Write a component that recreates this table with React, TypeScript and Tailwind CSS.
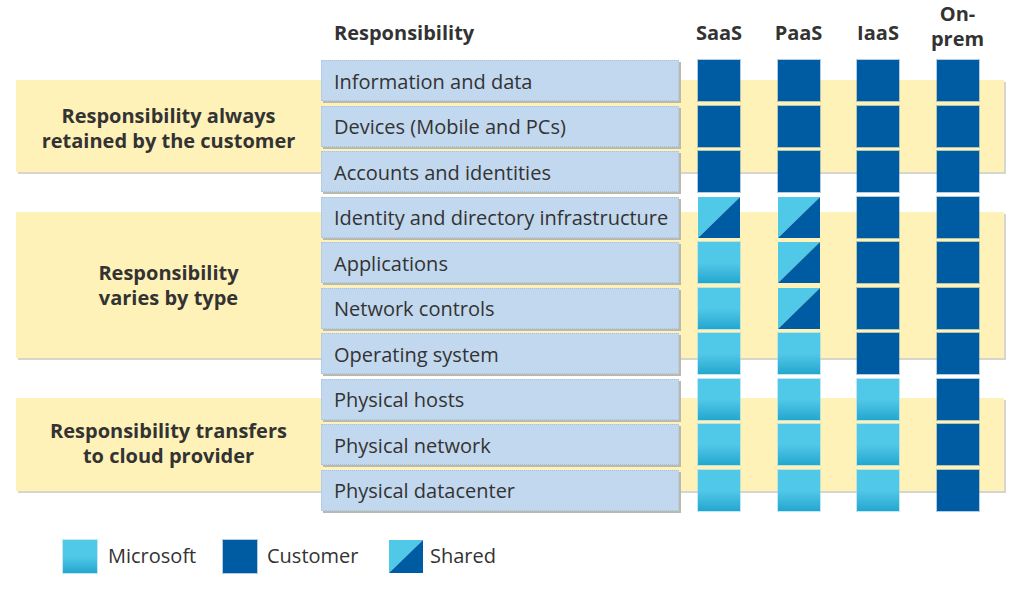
type Cell = 'm' | 'c' | 's';

const rows: { name: string; cells: Cell[] }[] = [
  { name: 'Information and data', cells: ['c', 'c', 'c', 'c'] },
  { name: 'Devices (Mobile and PCs)', cells: ['c', 'c', 'c', 'c'] },
  { name: 'Accounts and identities', cells: ['c', 'c', 'c', 'c'] },
  { name: 'Identity and directory infrastructure', cells: ['s', 's', 'c', 'c'] },
  { name: 'Applications', cells: ['m', 's', 'c', 'c'] },
  { name: 'Network controls', cells: ['m', 's', 'c', 'c'] },
  { name: 'Operating system', cells: ['m', 'm', 'c', 'c'] },
  { name: 'Physical hosts', cells: ['m', 'm', 'm', 'c'] },
  { name: 'Physical network', cells: ['m', 'm', 'm', 'c'] },
  { name: 'Physical datacenter', cells: ['m', 'm', 'm', 'c'] },
];

const bands = [
  { lines: ['Responsibility always', 'retained by the customer'], h: 'h-[92px] mt-[20px] pt-[4px]' },
  { lines: ['Responsibility', 'varies by type'], h: 'h-[146px] mt-[40px]' },
  { lines: ['Responsibility transfers', 'to cloud provider'], h: 'h-[93px] mt-[40px] pb-[4px]' },
];

function Square({ kind, className = '' }: { kind: Cell; className?: string }) {
  if (kind === 'c') {
    return <div className={`bg-[#005ca2] outline outline-1 outline-[#3d7fb8]/40 ${className}`} />;
  }
  if (kind === 'm') {
    return (
      <div
        className={`bg-linear-to-b from-[#50c8e8] from-50% to-[#22a7cf] outline outline-1 outline-[#9ad8f0]/60 ${className}`}
      />
    );
  }
  return (
    <div className={`relative ${className}`}>
      <svg viewBox="0 0 42 41" preserveAspectRatio="none" className="w-full h-full block">
        <polygon points="0,0 42,0 0,41" fill="#50c8e8" />
        <polygon points="42,0 42,41 0,41" fill="#005ca2" />
      </svg>
    </div>
  );
}

export default function App() {
  return (
    <div className="w-[1024px] h-[597px] bg-white text-[#333] overflow-hidden" style={{ fontFamily: '"Open Sans", "Noto Sans", sans-serif' }}>
      <div className="grid">
        {/* yellow group bands */}
        <div className="col-start-1 row-start-1 flex flex-col pt-[60px] pl-[16px] w-[1004px]">
          {bands.map((b, i) => (
            <div
              key={i}
              className={`${b.h} bg-[#fff2b8] shadow-[2px_2px_0_#d6d6cc] flex items-center`}
            >
              <div className="w-[305px] text-center font-bold text-[20px] leading-[25px]">
                {b.lines.map((l) => (
                  <div key={l}>{l}</div>
                ))}
              </div>
            </div>
          ))}
        </div>

        {/* table */}
        <div className="col-start-1 row-start-1 flex flex-col pl-[321px]">
          <div className="h-[60px] flex">
            <div className="w-[358px] pl-[13px] pt-[20px] font-bold text-[20px] leading-[25px]">Responsibility</div>
            <div className="flex gap-[37.5px] ml-[19px] font-bold text-[20px] leading-[25px]">
              {['SaaS', 'PaaS', 'IaaS'].map((h) => (
                <div key={h} className="w-[42px] flex justify-center pt-[20px] whitespace-nowrap">
                  {h}
                </div>
              ))}
              <div className="w-[42px] flex flex-col items-center pt-[1px]">
                <div>On-</div>
                <div>prem</div>
              </div>
            </div>
          </div>
          <div className="flex flex-col gap-[4.5px]">
            {rows.map((r) => (
              <div key={r.name} className="flex h-[41px]">
                <div className="w-[358px] h-full bg-[#c2d8ee] border border-dotted border-[#a9c3df] shadow-[2px_2px_0_#b9b9ad] flex items-center pl-[12px] pt-[2px] text-[20px] whitespace-nowrap">
                  {r.name}
                </div>
                <div className="flex gap-[37.5px] ml-[19px]">
                  {r.cells.map((c, i) => (
                    <Square key={i} kind={c} className="w-[42px] h-[41px]" />
                  ))}
                </div>
              </div>
            ))}
          </div>
        </div>
      </div>

      {/* legend */}
      <div className="flex items-center pl-[63px] mt-[29px] text-[20px]">
        <div className="flex items-center gap-[11px] w-[160px]">
          <Square kind="m" className="w-[34px] h-[33px]" />
          <span>Microsoft</span>
        </div>
        <div className="flex items-center gap-[10px] w-[166px]">
          <Square kind="c" className="w-[34px] h-[33px]" />
          <span>Customer</span>
        </div>
        <div className="flex items-center gap-[7px]">
          <Square kind="s" className="w-[34px] h-[33px]" />
          <span>Shared</span>
        </div>
      </div>
    </div>
  );
}
